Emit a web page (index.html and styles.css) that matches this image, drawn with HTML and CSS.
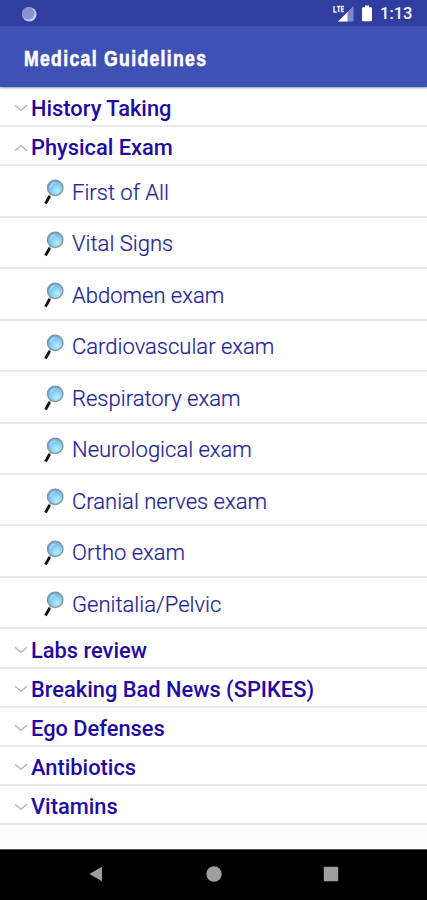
FILE: index.html
```html
<!DOCTYPE html>
<html lang="en">
<head>
<meta charset="utf-8">
<title>Medical Guidelines</title>
<link rel="stylesheet" href="styles.css">
</head>
<body>
<svg class="defs" width="0" height="0" aria-hidden="true">
  <defs>
    <radialGradient id="glass" cx="62%" cy="70%" r="75%">
      <stop offset="0" stop-color="#b5f0fd"/>
      <stop offset=".55" stop-color="#83caf4"/>
      <stop offset="1" stop-color="#5da6e3"/>
    </radialGradient>
    <symbol id="lens" viewBox="0 0 20 26">
      <path d="M6.6 15.2 5.4 17.4" stroke="#999" stroke-width="1.5"/>
      <path d="M5.7 17 1.5 24.6" stroke="#111" stroke-width="2.8"/>
      <circle cx="11.2" cy="8.9" r="7.7" fill="url(#glass)" stroke="#84959d" stroke-width="1.4"/>
      <path d="M6.3 8.5q.8-4 4.8-4.6" fill="none" stroke="#b4e2fa" stroke-width="1.3"/>
    </symbol>
    <symbol id="chevron" viewBox="0 0 14 8"><path d="M1 1.2 7 6.3 13 1.2" fill="none" stroke="#b4b4b4" stroke-width="1.3"/></symbol>
  </defs>
</svg>
<header>
  <div class="status">
    <svg class="sync" viewBox="0 0 16 16"><circle cx="8.3" cy="8.4" r="7.2" fill="#c3cbed"/><circle cx="7.2" cy="7.3" r="6.2" fill="#8792cf"/></svg>
    <svg class="signal" viewBox="0 0 21 17"><path d="M20.5 1v15.5H5z" fill="#8088c8"/><path d="M14.5 7v9.5H5z" fill="#fff"/><path d="M1 1v6h2.7M3.8 1.4h3.8M5.7 1v6M11 1.4H8.6v5.2H11M8.5 4h2.3" fill="none" stroke="#e5e8fa" stroke-width="1.5"/></svg>
    <svg class="battery" viewBox="0 0 10 17"><path d="M3 .5h4v1.7h2q1 0 1 1v12q0 1-1 1H1q-1 0-1-1v-12q0-1 1-1h2z" fill="#fff"/></svg>
    <span class="time">1:13</span>
  </div>
  <div class="appbar"><h1>Medical Guidelines</h1></div>
</header>
<main>
  <div class="group"><svg class="chev"><use href="#chevron"/></svg><span>History Taking</span></div>
  <div class="group open"><svg class="chev"><use href="#chevron"/></svg><span>Physical Exam</span></div>
  <div class="item"><svg class="lens"><use href="#lens"/></svg><span>First of All</span></div>
  <div class="item"><svg class="lens"><use href="#lens"/></svg><span>Vital Signs</span></div>
  <div class="item"><svg class="lens"><use href="#lens"/></svg><span>Abdomen exam</span></div>
  <div class="item"><svg class="lens"><use href="#lens"/></svg><span>Cardiovascular exam</span></div>
  <div class="item"><svg class="lens"><use href="#lens"/></svg><span>Respiratory exam</span></div>
  <div class="item"><svg class="lens"><use href="#lens"/></svg><span>Neurological exam</span></div>
  <div class="item"><svg class="lens"><use href="#lens"/></svg><span>Cranial nerves exam</span></div>
  <div class="item"><svg class="lens"><use href="#lens"/></svg><span>Ortho exam</span></div>
  <div class="item"><svg class="lens"><use href="#lens"/></svg><span>Genitalia/Pelvic</span></div>
  <div class="group"><svg class="chev"><use href="#chevron"/></svg><span>Labs review</span></div>
  <div class="group"><svg class="chev"><use href="#chevron"/></svg><span>Breaking Bad News (SPIKES)</span></div>
  <div class="group"><svg class="chev"><use href="#chevron"/></svg><span>Ego Defenses</span></div>
  <div class="group"><svg class="chev"><use href="#chevron"/></svg><span>Antibiotics</span></div>
  <div class="group"><svg class="chev"><use href="#chevron"/></svg><span>Vitamins</span></div>
</main>
<nav>
  <svg viewBox="0 0 16 16"><path d="M1.3 8 14 .7v14.6z"/></svg>
  <svg viewBox="0 0 16 16"><circle cx="8" cy="8" r="7.7"/></svg>
  <svg viewBox="0 0 16 16"><rect x=".8" y=".8" width="14.4" height="14.4" rx=".8"/></svg>
</nav>
</body>
</html>
```

FILE: styles.css
```css
* { box-sizing: border-box; }
body {
  margin: 0;
  height: 900px;
  display: flex;
  flex-direction: column;
  overflow: hidden;
  background: #fdfdfd;
  font-family: Roboto, "Liberation Sans", sans-serif;
}
.defs { position: absolute; }
header { position: relative; z-index: 1; flex: none; height: 87px; background: #3f51b5; box-shadow: 0 1px 2px #999; }
.status {
  height: 26px;
  display: flex;
  align-items: center;
  padding: 1px 16px 0 21px;
  background: #303f9f;
}
.sync { width: 16px; height: 16px; }
.signal { width: 21px; height: 17px; margin-left: auto; }
.battery { width: 10px; height: 17px; margin: 0 8px 0 8px; }
.time { width: 31px; color: #f3f4ff; font-size: 16.5px; font-weight: 500; line-height: 26px; padding-top: 1px; white-space: nowrap; }
.appbar { height: 61px; display: flex; align-items: center; padding: 4px 0 0 24px; }
h1 {
  margin: 0;
  color: #fff;
  font: 700 21.5px/26px "Liberation Sans", sans-serif;
  letter-spacing: 1.6px;
  white-space: nowrap;
  -webkit-text-stroke: .6px #fff;
  transform: scaleX(.82);
  transform-origin: left;
}
main { flex: 1; min-height: 0; padding-top: .9px; }
.group, .item { display: flex; align-items: center; border-bottom: 2px solid #e8e8e8; white-space: nowrap; background: #fff; }
.group { height: 39.16px; padding: 4px 0 0 14px; color: #220aa5; font-size: 21.85px; font-weight: 500; }
.item { height: 51.47px; padding: 3px 0 0 44px; color: #23239a; font-size: 22px; font-weight: 300; -webkit-text-stroke: .2px #23239a; }
.chev { width: 14px; height: 8px; margin-right: 3px; }
.open .chev { transform: rotate(180deg); }
.lens { width: 20px; height: 26px; margin-right: 8px; }
nav {
  flex: none;
  height: 51px;
  display: flex;
  align-items: center;
  justify-content: space-between;
  padding: 0 88px 2px;
  background: #000;
  border-top: 1px solid #555;
  fill: #9e9e9e;
}
nav svg { width: 16px; height: 16px; }
```
